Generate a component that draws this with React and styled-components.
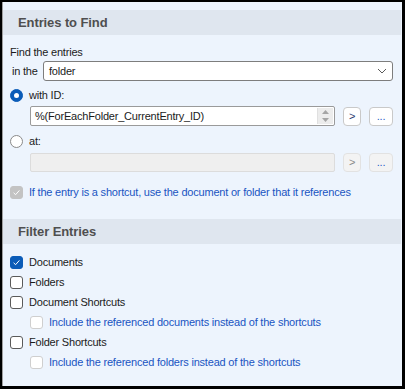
import styled, { createGlobalStyle } from "styled-components";

const GlobalStyle = createGlobalStyle`
  html, body {
    margin: 0;
    padding: 0;
    background: #ffffff;
  }
  body {
    font-family: "Liberation Sans", Arial, sans-serif;
    font-size: 11px;
    letter-spacing: -0.2px;
    color: #1b1b1b;
  }
`;

const Frame = styled.div`
  width: 405px;
  height: 389px;
  box-sizing: border-box;
  border: solid #000;
  border-width: 2px 3px 3px 2px;
  background: #edf4fd;
`;

const Panel = styled.div`
  height: 100%;
  box-sizing: border-box;
  border-left: 1px solid #9f9f9f;
  padding: 8px 1px 0 0;
  display: flex;
  flex-direction: column;
`;

const SectionHeader = styled.div`
  height: 25px;
  margin-top: ${(p) => p.$mt || 0}px;
  display: flex;
  align-items: center;
  padding-left: 15px;
  background: #dfe6ef;
  color: #4f4f4f;
  font-size: 13px;
  font-weight: bold;
  letter-spacing: -0.1px;
`;

const Body = styled.div`
  display: flex;
  flex-direction: column;
  padding-left: 7px;
`;

const Row = styled.div`
  display: flex;
  align-items: center;
  height: ${(p) => p.$h || 20}px;
  margin-top: ${(p) => p.$mt || 0}px;
  padding-left: ${(p) => p.$indent || 0}px;
  gap: 6px;
`;

const Label = styled.span`
  color: ${(p) => (p.$blue ? "#1a55c2" : "#1b1b1b")};
  white-space: nowrap;
`;

const InLabel = styled.span`
  width: 31px;
  padding-left: 2px;
  white-space: nowrap;
`;

const Select = styled.div`
  width: 350px;
  height: 20px;
  box-sizing: border-box;
  border: 1px solid #7d7d7d;
  border-radius: 3px;
  background: #ffffff;
  display: flex;
  align-items: center;
  justify-content: space-between;
  padding: 0 5px 0 5px;
`;

const InputBox = styled.div`
  width: 305px;
  height: ${(p) => (p.$disabled ? 19 : 20)}px;
  margin-left: 20px;
  box-sizing: border-box;
  border: 1px solid ${(p) => (p.$disabled ? "#dcdcdc" : "#9a9a9a")};
  border-radius: 2px;
  background: ${(p) => (p.$disabled ? "#efefef" : "#ffffff")};
  display: flex;
  align-items: stretch;
  padding: 1px 1px 1px 4px;
`;

const InputText = styled.span`
  flex: 1;
  display: flex;
  align-items: center;
  white-space: nowrap;
`;

const Spin = styled.div`
  width: 15px;
  background: #ececec;
  border-left: 1px solid #e0e0e0;
  display: flex;
  flex-direction: column;
  align-items: center;
  justify-content: space-around;
`;

const SmallButton = styled.div`
  width: ${(p) => p.$w}px;
  height: 19px;
  margin-left: 2px;
  box-sizing: border-box;
  border: 1px solid ${(p) => (p.$disabled ? "#e2e2e2" : "#c9c9c9")};
  border-radius: 4px;
  background: ${(p) => (p.$disabled ? "#f3f3f3" : "#ffffff")};
  color: ${(p) => (p.$dim ? "#8a8a8a" : p.$dark ? "#2a3c70" : "#2a5fc8")};
  display: flex;
  align-items: center;
  justify-content: center;
  font-size: 11px;
  line-height: 1;
`;

const RadioDot = styled.span`
  width: 13px;
  height: 13px;
  box-sizing: border-box;
  border-radius: 50%;
  flex: none;
  background: ${(p) => (p.$on ? "#0b5cb8" : "#ffffff")};
  border: 1px solid ${(p) => (p.$on ? "#0b5cb8" : "#8a8a8a")};
  display: flex;
  align-items: center;
  justify-content: center;
  &::after {
    content: "";
    display: ${(p) => (p.$on ? "block" : "none")};
    width: 5px;
    height: 5px;
    border-radius: 50%;
    background: #ffffff;
  }
`;

const Box = styled.span`
  width: 13px;
  height: 13px;
  box-sizing: border-box;
  flex: none;
  border-radius: 3px;
  display: flex;
  align-items: center;
  justify-content: center;
  background: ${(p) =>
    p.$on ? (p.$disabled ? "#c3c3c3" : "#0b5cb8") : "#ffffff"};
  border: 1px solid
    ${(p) =>
      p.$on
        ? p.$disabled
          ? "#c3c3c3"
          : "#0b5cb8"
        : p.$disabled
        ? "#cfcfcf"
        : "#5a5a5a"};
`;

const Tick = () => (
  <svg width="9" height="9" viewBox="0 0 9 9">
    <path d="M1.6 4.8 L3.6 6.7 L7.4 2.4" fill="none" stroke="#fff" strokeWidth="1" />
  </svg>
);

const Chevron = () => (
  <svg width="10" height="6" viewBox="0 0 10 6">
    <path d="M1 1 L5 5 L9 1" fill="none" stroke="#5a5a5a" strokeWidth="1" />
  </svg>
);

const Arrow = ({ up }) => (
  <svg width="7" height="4" viewBox="0 0 7 4">
    <path d={up ? "M0 4 L3.5 0 L7 4 Z" : "M0 0 L3.5 4 L7 0 Z"} fill="#a5a5a5" />
  </svg>
);

const Check = ({ on, disabled, blue, children, indent, mt }) => (
  <Row $indent={indent} $mt={mt}>
    <Box $on={on} $disabled={disabled}>
      {on && <Tick />}
    </Box>
    <Label $blue={blue}>{children}</Label>
  </Row>
);

export default function App() {
  return (
    <>
      <GlobalStyle />
      <Frame>
        <Panel>
          <SectionHeader>Entries to Find</SectionHeader>
          <Body>
            <Row $h={18} $mt={8}>
              <Label>Find the entries</Label>
            </Row>
            <Row $h={20} style={{ gap: 0 }}>
              <InLabel>in the</InLabel>
              <Select>
                <span>folder</span>
                <Chevron />
              </Select>
            </Row>
            <Row $mt={4}>
              <RadioDot $on />
              <Label>with ID:</Label>
            </Row>
            <Row $mt={1}>
              <InputBox>
                <InputText>%(ForEachFolder_CurrentEntry_ID)</InputText>
                <Spin>
                  <Arrow up />
                  <Arrow />
                </Spin>
              </InputBox>
              <SmallButton $w={18} $dark>&gt;</SmallButton>
              <SmallButton $w={24}>...</SmallButton>
            </Row>
            <Row $mt={5}>
              <RadioDot />
              <Label>at:</Label>
            </Row>
            <Row $h={19} $mt={2}>
              <InputBox $disabled>
                <InputText />
              </InputBox>
              <SmallButton $w={18} $disabled $dim>&gt;</SmallButton>
              <SmallButton $w={24} $disabled>...</SmallButton>
            </Row>
            <Check on disabled blue mt={10}>
              If the entry is a shortcut, use the document or folder that it references
            </Check>
          </Body>
          <SectionHeader $mt={17}>Filter Entries</SectionHeader>
          <Body>
            <Check on mt={8}>Documents</Check>
            <Check>Folders</Check>
            <Check>Document Shortcuts</Check>
            <Check disabled blue indent={20}>
              Include the referenced documents instead of the shortcuts
            </Check>
            <Check>Folder Shortcuts</Check>
            <Check disabled blue indent={20}>
              Include the referenced folders instead of the shortcuts
            </Check>
          </Body>
        </Panel>
      </Frame>
    </>
  );
}
